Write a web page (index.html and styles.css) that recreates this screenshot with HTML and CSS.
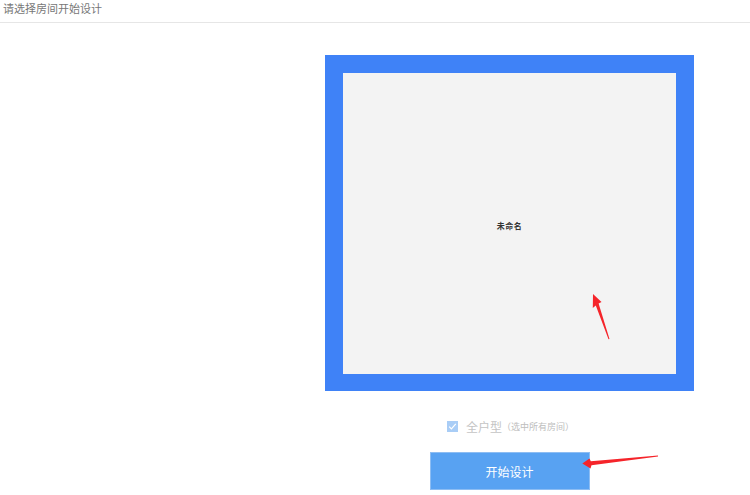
FILE: index.html
```html
<!DOCTYPE html>
<html lang="zh-CN">
<head>
<meta charset="utf-8">
<title>请选择房间开始设计</title>
<link rel="stylesheet" href="styles.css">
</head>
<body>
<header class="top-bar">请选择房间开始设计</header>
<main class="layout">
  <aside class="side"></aside>
  <section class="stage">
    <div class="room-frame">
      <div class="room">未命名</div>
    </div>
    <label class="whole">
      <span class="check">
        <svg viewBox="0 0 11 11" width="11" height="11"><path d="M2.2 5.6 L4.4 7.8 L8.8 2.8" fill="none" stroke="#fff" stroke-width="1.2"/></svg>
      </span>
      <span class="whole-label">全户型</span>
      <span class="whole-note">（选中所有房间）</span>
    </label>
    <button class="start">开始设计</button>
  </section>
</main>
<svg class="arrows" width="750" height="495" viewBox="0 0 750 495">
  <polygon points="593,294 601.5,302 598.6,303.5 609.5,339 608.5,339.3 595.8,305.5 592.8,308" fill="#f5242a"/>
  <polygon points="582.3,463.5 589.5,458.5 590.8,461.2 658,455.6 658,456.6 591.5,465.2 590.5,468.5" fill="#f5242a"/>
</svg>
</body>
</html>
```

FILE: styles.css
```css
html, body {
  margin: 0;
  padding: 0;
  background: #fff;
  width: 750px;
  height: 495px;
  overflow: hidden;
  font-family: "Noto Sans CJK SC", "Noto Sans", sans-serif;
}

.top-bar {
  height: 23px;
  line-height: 17px;
  padding-left: 3px;
  font-size: 11px;
  color: #777;
  border-bottom: 1px solid #e6e6e6;
  box-sizing: border-box;
}

.layout {
  display: flex;
  width: 750px;
}

.side {
  width: 269px;
  flex: none;
}

.stage {
  flex: 1;
  display: flex;
  flex-direction: column;
  align-items: center;
}

.room-frame {
  margin-top: 32px;
  width: 369px;
  height: 336px;
  box-sizing: border-box;
  background: #3f82f7;
  border-top: 18px solid #3f82f7;
  border-left: 18px solid #3f82f7;
  border-right: 18px solid #3f82f7;
  border-bottom: 17px solid #3f82f7;
}

.room {
  width: 100%;
  height: 100%;
  background: #f3f3f3;
  display: flex;
  align-items: center;
  justify-content: center;
  font-size: 8px;
  font-weight: bold;
  color: #333;
  letter-spacing: 0.5px;
  padding-top: 3px;
  box-sizing: border-box;
}

.whole {
  margin-top: 25px;
  height: 20px;
  display: flex;
  align-items: center;
  padding-left: 2px;
}

.check {
  width: 11px;
  height: 11px;
  background: #a9cdf6;
  display: block;
  margin-right: 8px;
}

.check svg {
  display: block;
}

.whole-label {
  font-size: 12px;
  color: #c4c4c4;
}

.whole-note {
  font-size: 9px;
  color: #bdbdbd;
}

.start {
  margin-top: 16px;
  width: 160px;
  height: 38px;
  border: 1px solid #8dbdf3;
  background: #58a2f2;
  color: #fff;
  font-family: "Noto Sans CJK SC", "Noto Sans", sans-serif;
  font-size: 12px;
  padding: 0;
  cursor: pointer;
}

.arrows {
  position: absolute;
  left: 0;
  top: 0;
  pointer-events: none;
}
```
